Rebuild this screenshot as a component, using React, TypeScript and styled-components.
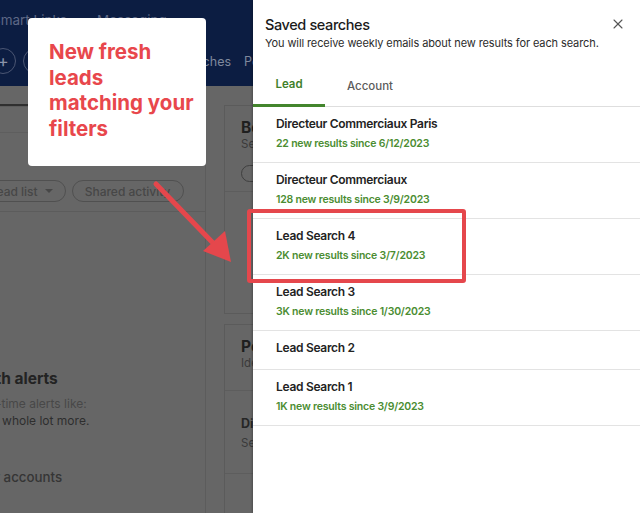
import styled, { createGlobalStyle } from "styled-components";
import { X } from "lucide-react";

interface SavedSearch {
  name: string;
  results?: string;
}

const searches: SavedSearch[] = [
  { name: "Directeur Commerciaux Paris", results: "22 new results since 6/12/2023" },
  { name: "Directeur Commerciaux", results: "128 new results since 3/9/2023" },
  { name: "Lead Search 4", results: "2K new results since 3/7/2023" },
  { name: "Lead Search 3", results: "3K new results since 1/30/2023" },
  { name: "Lead Search 2" },
  { name: "Lead Search 1", results: "1K new results since 3/9/2023" },
];

const GlobalStyle = createGlobalStyle`
  * {
    box-sizing: border-box;
  }

  body {
    margin: 0;
    background: #666666;
    font-family: Inter, "Noto Sans", sans-serif;
    overflow: hidden;
  }
`;

const Page = styled.div`
  position: relative;
  width: 640px;
  height: 513px;
  overflow: hidden;
  background: #666666;
`;

/* dimmed app behind the drawer */

const Header = styled.header`
  height: 86px;
  background: #0c1d42;
  display: flex;
  flex-direction: column;
`;

const HeaderTop = styled.div`
  height: 40px;
  display: flex;
  align-items: center;
  gap: 30px;
  margin-left: -8px;
  font-size: 13.5px;
  color: #5e6886;
`;

const HeaderNav = styled.div`
  flex: 1;
  display: flex;
  align-items: center;
  gap: 7px;
  margin-left: -10px;
  padding-bottom: 4px;
`;

const RoundButton = styled.div`
  width: 26px;
  height: 26px;
  border-radius: 50%;
  border: 1px solid #4b5673;
  color: #8a93a9;
  display: flex;
  align-items: center;
  justify-content: center;
  font-size: 17px;
  flex-shrink: 0;
`;

const NavLinks = styled.div`
  display: flex;
  gap: 13px;
  margin-left: 81px;
  font-size: 12.5px;
  color: #7f889d;
  white-space: nowrap;
`;

const Body = styled.div`
  display: flex;
  height: 427px;
`;

const MainColumn = styled.section`
  width: 356px;
  margin-left: -150px;
  flex-shrink: 0;
  border-right: 1px solid #5c5c5c;
  display: flex;
  flex-direction: column;
`;

const TabStrip = styled.div`
  height: 21px;
  display: flex;
  align-items: flex-end;
  padding-left: 40px;
  border-bottom: 1px solid #5c5c5c;
`;

const StripTab = styled.div`
  width: 138px;
  height: 2px;
  background: #2f2f2f;
`;

const SearchBar = styled.div`
  height: 26px;
  border-bottom: 1px solid #5e5e5e;
`;

const FilterBar = styled.div`
  height: 79px;
  display: flex;
  align-items: flex-end;
  gap: 6px;
  padding: 0 0 9px 81px;
  border-bottom: 1px solid #5c5c5c;
`;

const Pill = styled.div`
  height: 22px;
  padding: 0 12px;
  border: 1px solid #505050;
  border-radius: 11px;
  display: flex;
  align-items: center;
  gap: 7px;
  font-size: 12px;
  font-weight: 500;
  color: #474747;
  white-space: nowrap;
`;

const Caret = styled.span`
  width: 0;
  height: 0;
  border-left: 4px solid transparent;
  border-right: 4px solid transparent;
  border-top: 4px solid #474747;
`;

const EmptyState = styled.div`
  padding: 157px 0 0 8px;
  display: flex;
  flex-direction: column;
`;

const EmptyTitle = styled.h2`
  margin: 0 0 6px;
  font-size: 15.5px;
  line-height: 20px;
  font-weight: 700;
  color: #232323;
`;

const EmptyText = styled.p<{ $strong?: boolean }>`
  margin: 0;
  font-size: 12px;
  line-height: 17px;
  color: ${(p) => (p.$strong ? "#2e2e2e" : "#484848")};
`;

const EmptyItem = styled.p`
  margin: 40px 0 0;
  font-size: 13.3px;
  font-weight: 500;
  color: #353535;
`;

const SideColumn = styled.aside`
  margin-left: 18px;
  width: 300px;
  padding-top: 19px;
  display: flex;
  flex-direction: column;
  gap: 10px;
`;

const SideCard = styled.div<{ $height: number }>`
  height: ${(p) => p.$height}px;
  flex-shrink: 0;
  border: 1px solid #5b5b5b;
  display: flex;
  flex-direction: column;
`;

const CardHead = styled.div<{ $height: number }>`
  padding: 12px 16px 0;
  height: ${(p) => p.$height}px;
  flex-shrink: 0;
  border-bottom: 1px solid #5d5d5d;
`;

const CardTitle = styled.div`
  font-size: 15.5px;
  line-height: 20px;
  font-weight: 700;
  color: #1f1f1f;
`;

const CardText = styled.div`
  margin-top: -1px;
  font-size: 11.5px;
  line-height: 14px;
  color: #3a3a3a;
`;

const GhostButton = styled.div`
  margin-top: 14px;
  width: 80px;
  height: 17px;
  border: 1px solid #3f3f3f;
  border-radius: 9px;
`;

const CardItem = styled.div`
  padding: 25px 16px 0;
  height: 83px;
  flex-shrink: 0;
  border-bottom: 1px solid #5d5d5d;
`;

const ItemTitle = styled.div`
  font-size: 12.5px;
  line-height: 16px;
  font-weight: 700;
  color: #262626;
  margin-bottom: 5px;
`;

/* saved searches drawer */

const Drawer = styled.div`
  position: absolute;
  top: 0;
  right: 0;
  width: 387px;
  height: 513px;
  background: #ffffff;
  box-shadow: -1px 0 2px rgba(0, 0, 0, 0.25);
  display: flex;
  flex-direction: column;
`;

const DrawerHeader = styled.div`
  position: relative;
  padding: 15px 12px 0;
  height: 66px;
`;

const DrawerTitle = styled.h1`
  margin: 0;
  font-size: 14.5px;
  line-height: 19px;
  font-weight: 500;
  letter-spacing: -0.4px;
  color: #1b1b1b;
`;

const DrawerSubtitle = styled.p`
  margin: 0;
  font-size: 11px;
  line-height: 18px;
  letter-spacing: -0.1px;
  color: #2b2b2b;
  white-space: nowrap;
`;

const CloseButton = styled.button`
  position: absolute;
  top: 16px;
  right: 14px;
  padding: 0;
  border: none;
  background: none;
  color: #555555;
  display: flex;
`;

const Tabs = styled.div`
  display: flex;
  height: 41px;
  border-bottom: 1px solid #dedede;
`;

const Tab = styled.div<{ $active?: boolean; $width: number }>`
  width: ${(p) => p.$width}px;
  display: flex;
  justify-content: center;
  padding-top: ${(p) => (p.$active ? 11 : 13)}px;
  font-size: 11.5px;
  font-weight: ${(p) => (p.$active ? 600 : 500)};
  color: ${(p) => (p.$active ? "#3f7f2b" : "#5b5b5b")};
  border-bottom: 3px solid ${(p) => (p.$active ? "#43852d" : "transparent")};
  margin-bottom: -1px;
`;

const List = styled.ul`
  margin: 0;
  padding: 0;
  list-style: none;
`;

const Row = styled.li`
  min-height: 39px;
  padding: 9px 23px 10px;
  border-bottom: 1px solid #e3e3e3;
`;

const RowTitle = styled.div`
  font-size: 12px;
  line-height: 16px;
  font-weight: 600;
  letter-spacing: -0.3px;
  color: #232323;
`;

const RowResults = styled.div`
  margin-top: 4px;
  font-size: 10.5px;
  line-height: 16px;
  font-weight: 600;
  letter-spacing: -0.2px;
  color: #4b8d32;
`;

/* annotation layer */

const Callout = styled.div`
  position: absolute;
  left: 28px;
  top: 18px;
  width: 178px;
  height: 148px;
  background: #ffffff;
  border-radius: 4px;
  padding: 21px 10px 0 21px;
  font-size: 20.5px;
  line-height: 25.5px;
  font-weight: 700;
  color: #e8474c;
`;

const Highlight = styled.div`
  position: absolute;
  left: 247px;
  top: 209px;
  width: 219px;
  height: 74px;
  border: 4px solid #e5474c;
  border-radius: 3px;
`;

const Arrow = styled.svg`
  position: absolute;
  left: 0;
  top: 0;
  pointer-events: none;
`;

export default function App() {
  return (
    <Page>
      <GlobalStyle />
      <Header>
        <HeaderTop>
          <span>Smart Links</span>
          <span>Messaging</span>
        </HeaderTop>
        <HeaderNav>
          <RoundButton>+</RoundButton>
          <RoundButton />
          <NavLinks>
            <span>Saved searches</span>
            <span>Personas</span>
          </NavLinks>
        </HeaderNav>
      </Header>
      <Body>
        <MainColumn>
          <TabStrip>
            <StripTab />
          </TabStrip>
          <SearchBar />
          <FilterBar>
            <Pill>
              Filter by lead list <Caret />
            </Pill>
            <Pill>Shared activity</Pill>
          </FilterBar>
          <EmptyState>
            <EmptyTitle>Stay in the loop with alerts</EmptyTitle>
            <EmptyText>Get notified through real-time alerts like:</EmptyText>
            <EmptyText $strong>Lead shares, news and a whole lot more.</EmptyText>
            <EmptyItem>Recent activity at your accounts</EmptyItem>
          </EmptyState>
        </MainColumn>
        <SideColumn>
          <SideCard $height={209}>
            <CardHead $height={86}>
              <CardTitle>Best path in</CardTitle>
              <CardText>See who can introduce you</CardText>
              <GhostButton />
            </CardHead>
          </SideCard>
          <SideCard $height={220}>
            <CardHead $height={66}>
              <CardTitle>Personas</CardTitle>
              <CardText>Identify your buyers</CardText>
            </CardHead>
            <CardItem>
              <ItemTitle>Discover new leads</ItemTitle>
              <CardText>See suggested leads</CardText>
            </CardItem>
          </SideCard>
        </SideColumn>
      </Body>

      <Drawer>
        <DrawerHeader>
          <DrawerTitle>Saved searches</DrawerTitle>
          <DrawerSubtitle>
            You will receive weekly emails about new results for each search.
          </DrawerSubtitle>
          <CloseButton aria-label="Close">
            <X size={16} strokeWidth={1.6} />
          </CloseButton>
        </DrawerHeader>
        <Tabs>
          <Tab $active $width={72}>Lead</Tab>
          <Tab $width={90}>Account</Tab>
        </Tabs>
        <List>
          {searches.map((s) => (
            <Row key={s.name}>
              <RowTitle>{s.name}</RowTitle>
              {s.results && <RowResults>{s.results}</RowResults>}
            </Row>
          ))}
        </List>
      </Drawer>

      <Callout>New fresh leads matching your filters</Callout>
      <Highlight />
      <Arrow width="640" height="513" viewBox="0 0 640 513">
        <line x1="156" y1="184" x2="214" y2="244" stroke="#e5474c" strokeWidth="5" strokeLinecap="round" />
        <polygon points="231,262 203,251 225,231" fill="#e5474c" />
      </Arrow>
    </Page>
  );
}
